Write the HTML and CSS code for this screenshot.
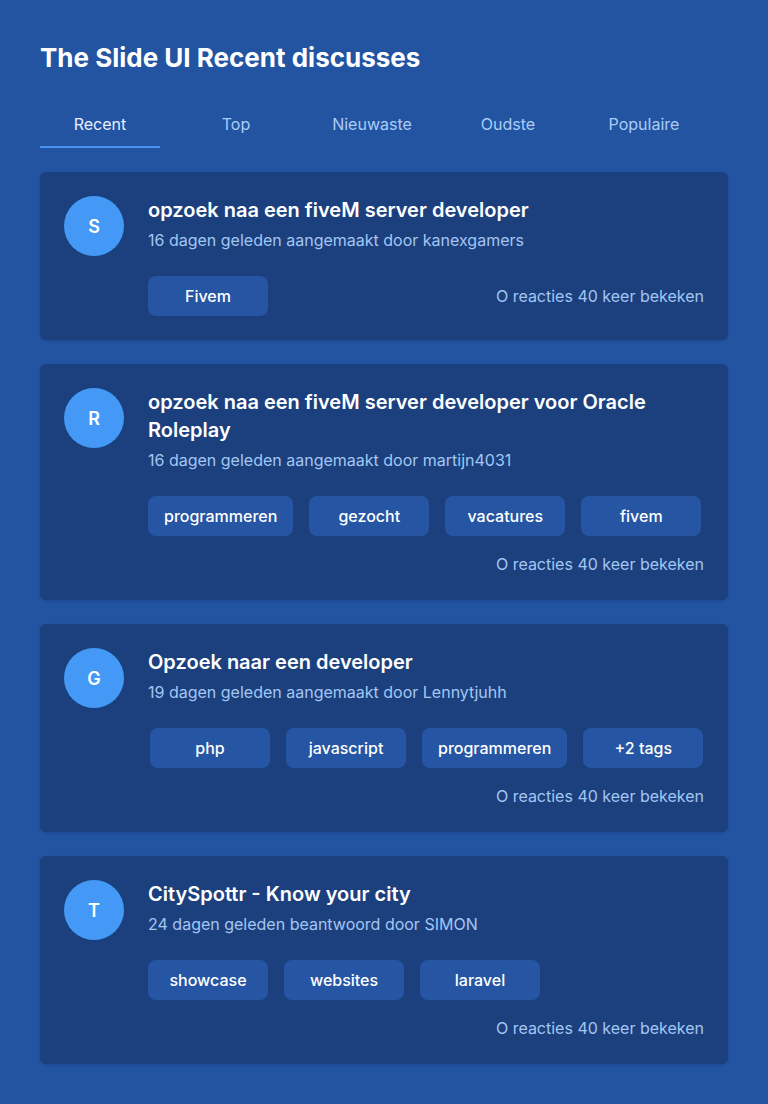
FILE: index.html
```html
<!DOCTYPE html>
<html lang="nl">
<head>
<meta charset="utf-8">
<title>The Slide UI Recent discusses</title>
<link rel="stylesheet" href="styles.css">
</head>
<body>
<main class="page">
  <h1 class="title">The Slide UI Recent discusses</h1>
  <nav class="tabs">
    <a class="tab active">Recent</a>
    <a class="tab">Top</a>
    <a class="tab">Nieuwaste</a>
    <a class="tab">Oudste</a>
    <a class="tab">Populaire</a>
  </nav>
  <section class="list">
    <article class="card">
      <div class="avatar">S</div>
      <div class="body">
        <h2 class="card-title">opzoek naa een fiveM server developer</h2>
        <p class="meta">16 dagen geleden aangemaakt door kanexgamers</p>
        <div class="footer">
          <div class="tags"><span class="tag">Fivem</span></div>
          <span class="stats">O reacties 40 keer bekeken</span>
        </div>
      </div>
    </article>
    <article class="card">
      <div class="avatar">R</div>
      <div class="body">
        <h2 class="card-title">opzoek naa een fiveM server developer voor Oracle Roleplay</h2>
        <p class="meta">16 dagen geleden aangemaakt door martijn4031</p>
        <div class="footer">
          <div class="tags">
            <span class="tag">programmeren</span>
            <span class="tag">gezocht</span>
            <span class="tag">vacatures</span>
            <span class="tag">fivem</span>
          </div>
          <span class="stats">O reacties 40 keer bekeken</span>
        </div>
      </div>
    </article>
    <article class="card">
      <div class="avatar">G</div>
      <div class="body">
        <h2 class="card-title">Opzoek naar een developer</h2>
        <p class="meta">19 dagen geleden aangemaakt door Lennytjuhh</p>
        <div class="footer">
          <div class="tags tags-inset">
            <span class="tag">php</span>
            <span class="tag">javascript</span>
            <span class="tag">programmeren</span>
            <span class="tag">+2 tags</span>
          </div>
          <span class="stats">O reacties 40 keer bekeken</span>
        </div>
      </div>
    </article>
    <article class="card">
      <div class="avatar">T</div>
      <div class="body">
        <h2 class="card-title">CitySpottr - Know your city</h2>
        <p class="meta">24 dagen geleden beantwoord door SIMON</p>
        <div class="footer">
          <div class="tags">
            <span class="tag">showcase</span>
            <span class="tag">websites</span>
            <span class="tag">laravel</span>
          </div>
          <span class="stats">O reacties 40 keer bekeken</span>
        </div>
      </div>
    </article>
  </section>
</main>
</body>
</html>
```
FILE: styles.css
```css
* { box-sizing: border-box; }
html, body { margin: 0; padding: 0; }
body {
  background: #2354a2;
  font-family: Inter, "Noto Sans", "Liberation Sans", sans-serif;
  color: #ffffff;
  min-height: 1104px;
}
.page { padding: 40px; }
.title {
  margin: 0;
  font-size: 26px;
  line-height: 36px;
  font-weight: 700;
  color: #ffffff;
}
.tabs {
  display: flex;
  gap: 16px;
  margin-top: 24px;
}
.tab {
  width: 120px;
  text-align: center;
  padding: 12px 0 10px;
  font-size: 16px;
  line-height: 24px;
  color: #a9cdf7;
  border-bottom: 2px solid transparent;
}
.tab.active {
  color: #e6f0ff;
  border-bottom-color: #4a92ef;
}
.list {
  display: flex;
  flex-direction: column;
  gap: 24px;
  margin-top: 24px;
}
.card {
  display: flex;
  gap: 24px;
  padding: 24px;
  background: #1c407e;
  border-radius: 6px;
  box-shadow: 0 1px 3px rgba(10, 30, 70, 0.25);
}
.avatar {
  flex: none;
  width: 60px;
  height: 60px;
  border-radius: 50%;
  background: #4399f5;
  display: flex;
  align-items: center;
  justify-content: center;
  font-size: 18px;
  font-weight: 600;
  color: #ffffff;
}
.body { flex: 1; min-width: 0; }
.card-title {
  margin: 0;
  font-size: 20px;
  line-height: 28px;
  font-weight: 600;
  color: #ffffff;
}
.meta {
  margin: 4px 0 0;
  font-size: 16px;
  line-height: 24px;
  color: #a3c6f2;
}
.footer {
  display: flex;
  flex-wrap: wrap;
  align-items: center;
  justify-content: space-between;
  row-gap: 16px;
  margin-top: 24px;
}
.tags {
  display: flex;
  gap: 16px;
}
.tags-inset { padding-left: 2px; }
.tag {
  min-width: 120px;
  height: 40px;
  padding: 0 16px;
  display: flex;
  align-items: center;
  justify-content: center;
  background: #2555a3;
  border-radius: 8px;
  font-size: 16px;
  font-weight: 500;
  color: #ffffff;
}
.stats {
  margin-left: auto;
  font-size: 16px;
  line-height: 24px;
  color: #a3c6f2;
}
```
